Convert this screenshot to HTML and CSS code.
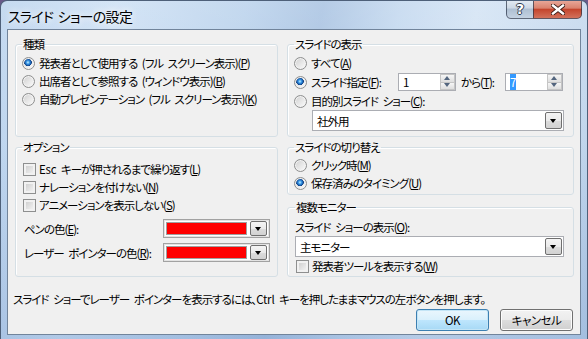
FILE: index.html
```html
<!DOCTYPE html>
<html lang="ja">
<head>
  <meta charset="UTF-8" />
  <meta name="viewport" content="width=device-width, initial-scale=1.0" />
  <title>スライド ショーの設定</title>
  <link rel="stylesheet" href="styles.css">
</head>
<body>
  <div class="window">
    <div class="titlebar">
      <span class="title">スライド ショーの設定</span>
      <div class="caption">
        <span class="cap-btn help">?</span>
        <span class="cap-btn close">
          <svg width="14" height="11" viewBox="0 0 14 11">
            <path d="M2 1.5 L12 9.5 M12 1.5 L2 9.5" stroke="#3a1a14" stroke-width="4.2" stroke-linecap="square" fill="none"/>
            <path d="M2 1.5 L12 9.5 M12 1.5 L2 9.5" stroke="#fff" stroke-width="2.4" stroke-linecap="square" fill="none"/>
          </svg>
        </span>
      </div>
    </div>

    <div class="client">
      <div class="groups">
        <fieldset class="group">
          <legend>種類</legend>
          <div class="opt"><span class="radio on"></span>発表者として使用する (フル スクリーン表示)(<u>P</u>)</div>
          <div class="opt"><span class="radio"></span>出席者として参照する (ウィンドウ表示)(<u>B</u>)</div>
          <div class="opt"><span class="radio"></span>自動プレゼンテーション (フル スクリーン表示)(<u>K</u>)</div>
        </fieldset>

        <fieldset class="group">
          <legend>スライドの表示</legend>
          <div class="opt"><span class="radio"></span>すべて(<u>A</u>)</div>
          <div class="opt range">
            <span class="radio on"></span>
            <span class="range-label">スライド指定(<u>F</u>):</span>
            <span class="spin"><span class="spin-val">1</span><span class="spin-btns"><i class="up"></i><i class="down"></i></span></span>
            <span class="to-label">から(<u>T</u>):</span>
            <span class="spin"><span class="spin-val"><span class="sel">7</span></span><span class="spin-btns"><i class="up"></i><i class="down"></i></span></span>
          </div>
          <div class="opt"><span class="radio"></span>目的別スライド ショー(<u>C</u>):</div>
          <div class="combo indent"><span class="combo-val">社外用</span><span class="drop"></span></div>
        </fieldset>

        <fieldset class="group options">
          <legend>オプション</legend>
          <div class="opt"><span class="check"></span><span class="latin">Esc</span> キーが押されるまで繰り返す(<u>L</u>)</div>
          <div class="opt"><span class="check"></span>ナレーションを付けない(<u>N</u>)</div>
          <div class="opt"><span class="check"></span>アニメーションを表示しない(<u>S</u>)</div>
          <div class="color-row">
            <span>ペンの色(<u>E</u>):</span>
            <span class="color-combo"><span class="swatch"></span><span class="drop"></span></span>
          </div>
          <div class="color-row">
            <span>レーザー ポインターの色(<u>R</u>):</span>
            <span class="color-combo"><span class="swatch"></span><span class="drop"></span></span>
          </div>
        </fieldset>

        <div class="stack">
          <fieldset class="group advance">
            <legend>スライドの切り替え</legend>
            <div class="opt"><span class="radio"></span>クリック時(<u>M</u>)</div>
            <div class="opt"><span class="radio on"></span>保存済みのタイミング(<u>U</u>)</div>
          </fieldset>

          <fieldset class="group monitor">
            <legend>複数モニター</legend>
            <div class="field-label">スライド ショーの表示(<u>O</u>):</div>
            <div class="combo"><span class="combo-val">主モニター</span><span class="drop"></span></div>
            <div class="opt"><span class="check"></span>発表者ツールを表示する(<u>W</u>)</div>
          </fieldset>
        </div>
      </div>

      <p class="hint">スライド ショーでレーザー ポインターを表示するには、<span class="latin">Ctrl</span> キーを押したままマウスの左ボタンを押します。</p>

      <div class="actions">
        <button class="btn default">OK</button>
        <button class="btn">キャンセル</button>
      </div>
    </div>
  </div>
</body>
</html>
```

FILE: styles.css
```css
body {
  margin: 0;
  background: #6a5a8a;
  font-family: "Noto Sans CJK JP", "Noto Sans", sans-serif;
  font-size: 11.5px;
  font-feature-settings: "palt";
  letter-spacing: -1px;
  word-spacing: 3px;
  color: #000;
}

.latin {
  letter-spacing: -0.2px;
}

.window {
  width: 588px;
  height: 339px;
  box-sizing: border-box;
  border: 1px solid #4e6079;
  border-bottom: none;
  border-radius: 7px 7px 0 0;
  padding: 0 6px;
  overflow: hidden;
  background:
    linear-gradient(180deg, rgba(255, 255, 255, 0.15) 0%, rgba(255, 255, 255, 0) 40%, rgba(90, 130, 190, 0.25) 100%),
    linear-gradient(100deg, #bcd4ee 0%, #cde0f4 18%, #bad2ec 38%, #a9c3e2 50%, #c3d8ef 62%, #d3e3f4 74%, #bcd2ea 100%);
}

/* title bar */
.titlebar {
  height: 28px;
  display: flex;
  justify-content: space-between;
  align-items: flex-start;
}

.title {
  margin-top: 6px;
  padding-left: 1px;
  font-size: 14px;
  line-height: 18px;
  letter-spacing: -0.7px;
  word-spacing: 2px;
  text-shadow: 0 0 6px rgba(255, 255, 255, 0.9), 0 0 10px rgba(255, 255, 255, 0.7);
}

.caption {
  display: flex;
  margin-top: -1px;
  margin-right: -1px;
}

.cap-btn {
  height: 19px;
  box-sizing: border-box;
  border: 1px solid rgba(40, 50, 70, 0.7);
  border-top: none;
  display: flex;
  align-items: center;
  justify-content: center;
}

.help {
  width: 27px;
  border-right: none;
  border-radius: 0 0 0 5px;
  background: linear-gradient(180deg, #e4ebf3 0%, #cdd8e5 45%, #aebfd2 50%, #c4d2e2 100%);
  font-family: "DejaVu Sans", sans-serif;
  font-weight: bold;
  font-size: 14px;
  letter-spacing: 0;
  color: #fff;
  text-shadow: 1px 0 #2c3a4c, -1px 0 #2c3a4c, 0 1px #2c3a4c, 0 -1px #2c3a4c;
}

.close {
  width: 49px;
  border-radius: 0 0 5px 0;
  background: linear-gradient(180deg, #e9ab9d 0%, #d9826e 45%, #c4452d 52%, #d2715b 100%);
}

/* client area */
.client {
  height: 306px;
  box-sizing: border-box;
  border: 1px solid #71849b;
  background: #f0f0f0;
  padding: 6px 7px 0;
}

.groups {
  display: grid;
  grid-template-columns: 263px 287px;
  grid-template-rows: 101px 138px;
  column-gap: 9px;
  row-gap: 2px;
}

.group {
  margin: 0;
  min-width: 0;
  padding: 2px 6px 0;
  border: 1px solid #d5dfe5;
  border-radius: 3px;
  box-shadow: 1px 1px 0 #fff inset;
}

.group legend {
  padding: 0 1px;
  line-height: 16px;
}

.opt {
  display: flex;
  align-items: center;
  height: 18px;
  white-space: pre;
}

.radio, .check {
  flex: none;
  width: 13px;
  height: 13px;
  box-sizing: border-box;
  margin-right: 4px;
  border: 1px solid #8e8f8f;
  background: linear-gradient(135deg, #cfcfcf 0%, #f6f6f6 85%);
  box-shadow: inset 0 0 0 1px #f3f3f3;
}

.radio {
  border-radius: 50%;
}

.radio.on {
  background:
    radial-gradient(circle at 45% 40%, #c8f0ff 0, #3c9be8 1.6px, #1b62b4 2.8px, #0f3f7e 3.6px, rgba(15, 63, 126, 0) 4px),
    linear-gradient(135deg, #cfcfcf 0%, #f6f6f6 85%);
}

.check {
  margin-left: 1px;
  margin-right: 3px;
  box-shadow: inset 0 0 0 2px #f1f1f1;
  background: linear-gradient(135deg, #c8c8c8 0%, #f4f4f4 90%);
}

/* range row */
.range {
  height: 20px;
}

.range-label {
  width: 87px;
}

.to-label {
  width: 44px;
  margin-left: 5px;
}

.spin {
  display: flex;
  width: 58px;
  height: 18px;
  box-sizing: border-box;
  border: 1px solid #abadb3;
  background: #fff;
}

.spin-val {
  flex: 1;
  padding-left: 4px;
  line-height: 16px;
}

.sel {
  background: #3399ff;
  color: #fff;
  letter-spacing: 0;
}

.spin-btns {
  width: 15px;
  display: flex;
  flex-direction: column;
}

.spin-btns i {
  flex: 1;
  position: relative;
  border: 1px solid #c5c5c5;
  background: linear-gradient(180deg, #f6f6f6, #dedede);
}

.spin-btns i + i {
  border-top: none;
}

.spin-btns i::after {
  content: "";
  position: absolute;
  left: 3px;
  top: 1px;
  border-left: 3.5px solid transparent;
  border-right: 3.5px solid transparent;
}

.spin-btns .up::after {
  border-bottom: 4px solid #53657e;
}

.spin-btns .down::after {
  border-top: 4px solid #53657e;
  top: 0;
}

/* combo boxes */
.combo {
  display: flex;
  align-items: center;
  height: 21px;
  box-sizing: border-box;
  margin-right: 3px;
  border: 1px solid #abadb3;
  background: #fff;
  padding: 1px;
}

.combo.indent {
  margin-left: 18px;
}

.combo-val {
  flex: 1;
  padding-left: 3px;
}

.drop {
  flex: none;
  position: relative;
  width: 17px;
  height: 17px;
  box-sizing: border-box;
  border: 1px solid #6f6f6f;
  border-radius: 2px;
  background: linear-gradient(180deg, #f4f4f4 0%, #ebebeb 50%, #dcdcdc 51%, #d2d2d2 100%);
}

.drop::after {
  content: "";
  position: absolute;
  left: 4px;
  top: 6px;
  border-left: 3.5px solid transparent;
  border-right: 3.5px solid transparent;
  border-top: 4px solid #000;
}

/* options */
.options {
  padding-top: 5px;
}

.color-row {
  display: flex;
  align-items: center;
  justify-content: space-between;
  padding-left: 2px;
  margin-top: 5px;
  height: 19px;
  white-space: pre;
}

.color-combo {
  display: flex;
  align-items: center;
  gap: 3px;
  width: 107px;
  height: 19px;
  box-sizing: border-box;
  margin-right: 1px;
  padding: 2px;
  border: 1px solid #a2a2a2;
  background: #fff;
  box-shadow: inset 0 0 0 1px #e3e3e3;
}

.swatch {
  flex: 1;
  height: 11px;
  border: 1px solid #a0a0a0;
  background: #ff0000;
}

.color-combo .drop {
  width: 17px;
  height: 15px;
}

.color-combo .drop::after {
  top: 5px;
}

/* right column */
.stack {
  display: flex;
  flex-direction: column;
  gap: 4px;
}

.advance {
  padding-top: 1px;
  padding-bottom: 2px;
}

.monitor {
  flex: 1;
  padding-left: 7px;
}

.field-label {
  line-height: 18px;
  padding-top: 1px;
}

/* footer */
.hint {
  margin: 14px 0 0 -2px;
  line-height: 16px;
  white-space: pre;
}

.actions {
  display: flex;
  justify-content: flex-end;
  gap: 11px;
  margin-top: 2px;
}

.btn {
  width: 73px;
  height: 22px;
  padding: 0;
  font: inherit;
  letter-spacing: -0.5px;
  border: 1px solid #707070;
  border-radius: 3px;
  background: linear-gradient(180deg, #f2f2f2 0%, #ebebeb 50%, #dddddd 51%, #cfcfcf 100%);
  box-shadow: inset 0 0 0 1px #fcfcfc;
}

.btn.default {
  border-color: #3c7fb1;
  background: linear-gradient(180deg, #eaf6fd 0%, #d9f0fc 50%, #bee6fd 51%, #a7d9f5 100%);
  box-shadow: inset 0 0 0 1px #c4e5f6;
}
```
